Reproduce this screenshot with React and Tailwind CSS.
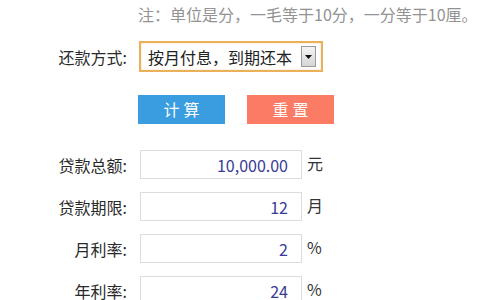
export default function App() {
  const rows = [
    { label: "贷款总额:", value: "10,000.00", unit: "元" },
    { label: "贷款期限:", value: "12", unit: "月" },
    { label: "月利率:", value: "2", unit: "%" },
    { label: "年利率:", value: "24", unit: "%" },
  ];
  return (
    <div
      className="w-[480px] h-[300px] bg-white overflow-hidden text-[#333]"
      style={{ fontFamily: '"Noto Sans CJK SC", "Noto Sans", sans-serif' }}
    >
      <div className="pl-[138px] pt-[5px] text-[16px] leading-[19px] text-[#939393] whitespace-nowrap">
        注：单位是分，一毛等于10分，一分等于10厘。
      </div>
      <div className="flex items-center mt-[17px] h-[31px]">
        <div className="w-[127px] text-right text-[16px] leading-[20px] text-[#2a2a2a]">还款方式:</div>
        <div className="ml-[12px] w-[184px] h-[31px] border-2 border-[#eab05a] bg-white flex items-center pl-[7px] pr-[5px] shadow-[inset_0_0_2px_rgba(234,176,90,0.5)]">
          <span className="text-[16px] leading-[20px] text-[#222] whitespace-nowrap">按月付息，到期还本</span>
          <div className="ml-auto w-[15px] h-[21px] border border-[#9a9a9a] bg-gradient-to-b from-[#f4f4f4] to-[#d6d6d6] flex items-center justify-center">
            <svg width="7" height="4" viewBox="0 0 7 4">
              <path d="M0 0 L7 0 L3.5 4 Z" fill="#111" />
            </svg>
          </div>
        </div>
      </div>
      <div className="flex mt-[23px] pl-[138px] gap-[22px]">
        <div className="w-[87px] h-[29px] bg-[#3a9de0] text-white text-[16px] leading-[29px] text-center tracking-[4px] pl-[4px]">计算</div>
        <div className="w-[87px] h-[29px] bg-[#fb7b65] text-white text-[16px] leading-[29px] text-center tracking-[4px] pl-[4px]">重置</div>
      </div>
      <div className="flex flex-col gap-[13px] mt-[26px]">
        {rows.map((r) => (
          <div key={r.label} className="flex items-center h-[29px]">
            <div className="w-[127px] text-right text-[16px] leading-[20px] text-[#2a2a2a]">{r.label}</div>
            <div className="ml-[13px] w-[162px] h-[29px] border border-[#dcdcdc] bg-white flex items-center justify-end pr-[13px] text-[16px] leading-[20px] text-[#3a3a96]">
              {r.value}
            </div>
            <div className="ml-[5px] text-[16px] leading-[20px] text-[#333] -mt-[4px]">{r.unit}</div>
          </div>
        ))}
      </div>
    </div>
  );
}
